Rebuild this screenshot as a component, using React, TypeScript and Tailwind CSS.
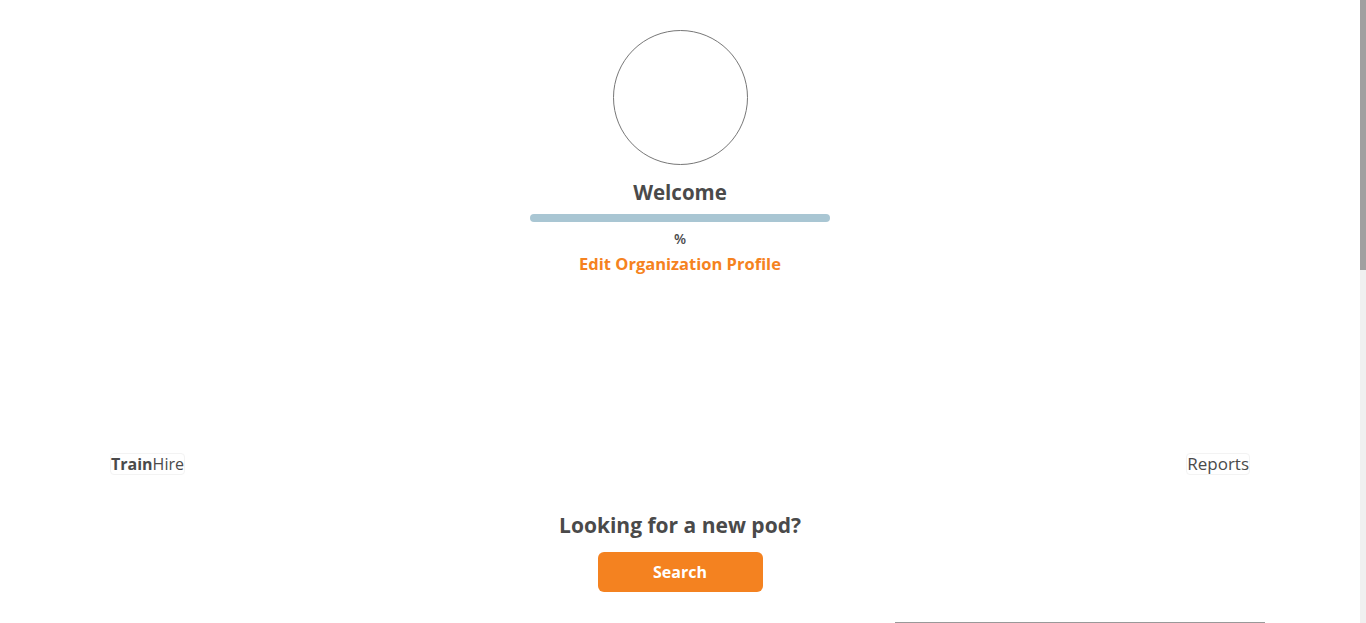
import React from "react";

export default function App() {
  return (
    <div
      className="flex h-[623px] w-full overflow-hidden bg-white text-[#4a4a4a]"
      style={{ fontFamily: '"Open Sans", "Noto Sans", sans-serif' }}
    >
      <div className="h-full flex-1 overflow-hidden">
        <div className="flex flex-col items-center pt-[30px]">
          <div className="h-[135px] w-[135px] rounded-full border border-[#777]" />
          <h1 className="mt-[13px] text-[20.5px] font-bold leading-[28px] text-[#4a4a4a]">Welcome</h1>
          <div className="mt-[8px] h-[8px] w-[300px] rounded-full bg-[#a9c6d3]" />
          <div className="mt-[7px] text-[14px] font-semibold leading-[20px]">%</div>
          <a className="mt-[4px] text-[16.5px] font-bold leading-[22px] text-[#f58220]">Edit Organization Profile</a>
        </div>

        <div className="mx-auto mt-[178px] flex w-[1140px] items-center justify-between">
          <span className="rounded-[4px] border border-[#f3f3f3] text-[16px] leading-[20px] text-[#4a4a4a]">
            <b className="font-bold">Train</b>Hire
          </span>
          <span className="rounded-[4px] border border-[#f3f3f3] text-[17px] leading-[20px] text-[#4a4a4a]">Reports</span>
        </div>

        <div className="mt-[36px] flex flex-col items-center">
          <h2 className="text-[21px] font-bold leading-[28px] text-[#4a4a4a]">Looking for a new pod?</h2>
          <button className="mt-[13px] h-[40px] w-[165px] rounded-[6px] bg-[#f48220] text-[16px] font-bold text-white">
            Search
          </button>
        </div>

        <div className="mx-auto mt-[30px] flex w-[1170px] justify-end">
          <div className="w-[370px] border-t border-[#999] pb-[800px]" />
        </div>
      </div>
      <div className="flex h-full w-[6px] flex-col bg-[#f0f0f0]">
        <div className="h-[270px] w-full bg-[#a0a0a0]" />
      </div>
    </div>
  );
}
